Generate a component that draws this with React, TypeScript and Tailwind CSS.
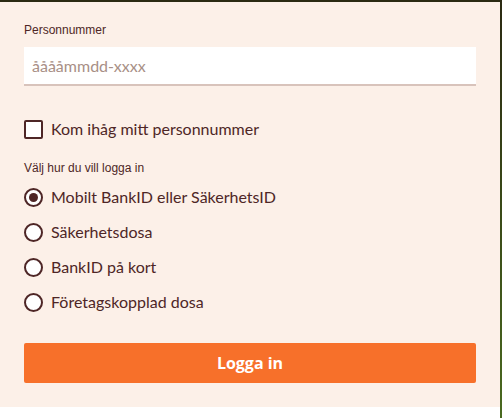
import React, { useState } from 'react';

const options = [
  'Mobilt BankID eller SäkerhetsID',
  'Säkerhetsdosa',
  'BankID på kort',
  'Företagskopplad dosa',
];

const App: React.FC = () => {
  const [method, setMethod] = useState(0);
  const [remember, setRemember] = useState(false);

  return (
    <div className="flex w-[502px] h-[418px] bg-white">
      <div className="w-[500px] self-start">
        <div className="border-t-2 border-[#2b2a12] bg-[#fcf0e8] px-6 pt-5 pb-6 text-[#4e2626]">
          <label className="block text-[12px] leading-4 font-['Liberation_Sans',Arial,sans-serif]">
            Personnummer
          </label>
          <input
            className="mt-[9px] block w-full h-[39px] bg-white border-b-2 border-[#d8c3bb] px-2 text-[16px] text-[#4e2626] placeholder:text-[#a88f86] outline-none font-['Lato',sans-serif]"
            placeholder="ååååmmdd-xxxx"
          />

          <label className="mt-[31px] flex items-center h-6 cursor-pointer">
            <span
              onClick={() => setRemember(!remember)}
              className="w-[19px] h-[19px] rounded-[2px] border-2 border-[#4e2626] bg-white flex items-center justify-center"
            >
              {remember && <span className="w-[9px] h-[9px] bg-[#4e2626]" />}
            </span>
            <span className="ml-2 text-[16px] font-['Lato',sans-serif]">Kom ihåg mitt personnummer</span>
          </label>

          <div className="mt-[19px] text-[12px] leading-4 font-['Liberation_Sans',Arial,sans-serif]">
            Välj hur du vill logga in
          </div>

          <div className="mt-[9px] flex flex-col gap-[11px]">
            {options.map((o, i) => (
              <div key={o} className="flex items-center h-6 cursor-pointer" onClick={() => setMethod(i)}>
                <span className="w-[19px] h-[19px] rounded-full border-2 border-[#4e2626] bg-white flex items-center justify-center">
                  {method === i && <span className="w-[9px] h-[9px] rounded-full bg-[#4e2626]" />}
                </span>
                <span className="ml-2 text-[16px] font-['Lato',sans-serif]">{o}</span>
              </div>
            ))}
          </div>

          <button className="mt-[29px] w-full h-10 rounded-[2px] bg-[#f7702a] text-white text-[16px] font-bold font-['Open_Sans',sans-serif]">
            Logga in
          </button>
        </div>
      </div>
      <div className="w-[2px] h-full bg-gradient-to-b from-[#2b2a12] via-[#3a4a18] to-[#4a6a20]" />
    </div>
  );
};

export default App;
